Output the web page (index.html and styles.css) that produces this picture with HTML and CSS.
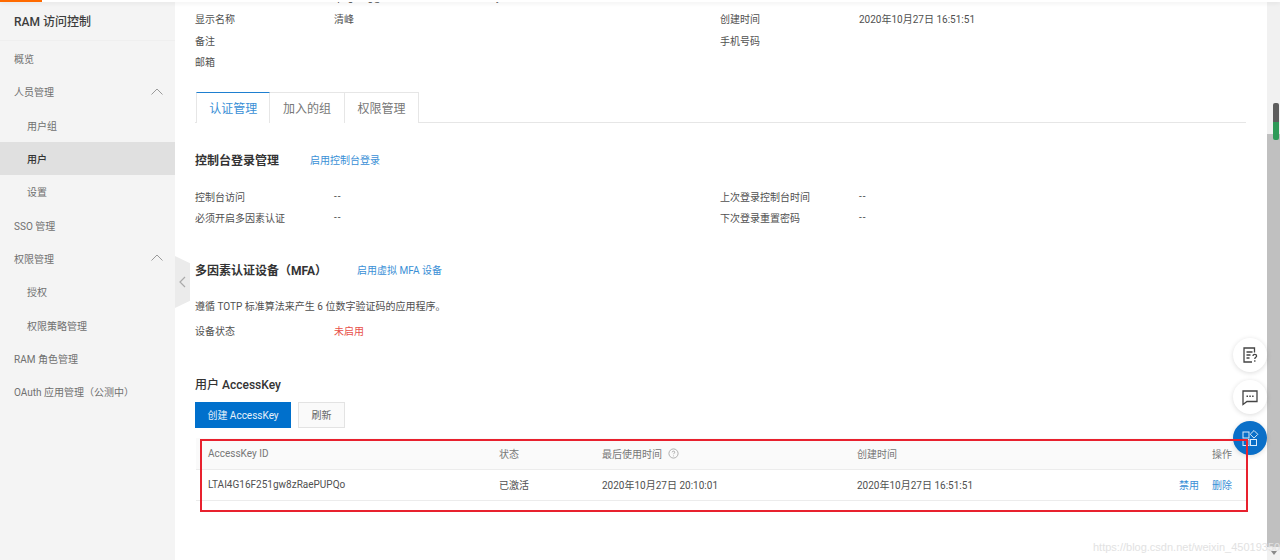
FILE: index.html
```html
<!DOCTYPE html>
<html lang="zh">
<head>
<meta charset="utf-8">
<title>RAM 访问控制</title>
<link rel="stylesheet" href="styles.css">
</head>
<body>
<div class="app">
  <aside class="sidebar">
    <div class="brand">RAM 访问控制</div>
    <nav class="nav">
      <div class="nav-item">概览</div>
      <div class="nav-item has-caret">人员管理<svg class="caret" viewBox="0 0 12 7"><path d="M.5 6.500 6 1l5.500 5.500"/></svg></div>
      <div class="nav-item sub">用户组</div>
      <div class="nav-item sub active">用户</div>
      <div class="nav-item sub">设置</div>
      <div class="nav-item">SSO 管理</div>
      <div class="nav-item has-caret">权限管理<svg class="caret" viewBox="0 0 12 7"><path d="M.5 6.500 6 1l5.500 5.500"/></svg></div>
      <div class="nav-item sub">授权</div>
      <div class="nav-item sub">权限策略管理</div>
      <div class="nav-item">RAM 角色管理</div>
      <div class="nav-item">OAuth 应用管理（公测中）</div>
    </nav>
  </aside>
  <main class="main">
    <div class="info-grid info-top">
      <div class="cell"><span class="label"></span><span>qingfeng@1000000000000000.onaliyun.com</span><span class="copy-icon"></span></div>
      <div class="cell"></div>
      <div class="cell"><span class="label">显示名称</span><span>清峰</span></div>
      <div class="cell"><span class="label">创建时间</span><span>2020年10月27日 16:51:51</span></div>
      <div class="cell"><span class="label">备注</span></div>
      <div class="cell"><span class="label">手机号码</span></div>
      <div class="cell"><span class="label">邮箱</span></div>
    </div>
    <div class="tabs">
      <div class="tab current">认证管理</div>
      <div class="tab">加入的组</div>
      <div class="tab">权限管理</div>
    </div>
    <div class="heading-row login-head"><h2>控制台登录管理</h2><a class="link">启用控制台登录</a></div>
    <div class="info-grid login-info">
      <div class="cell"><span class="label">控制台访问</span><span class="dash">--</span></div>
      <div class="cell"><span class="label">上次登录控制台时间</span><span class="dash">--</span></div>
      <div class="cell"><span class="label">必须开启多因素认证</span><span class="dash">--</span></div>
      <div class="cell"><span class="label">下次登录重置密码</span><span class="dash">--</span></div>
    </div>
    <div class="heading-row mfa-head"><h2>多因素认证设备（MFA）</h2><a class="link">启用虚拟 MFA 设备</a></div>
    <p class="desc">遵循 TOTP 标准算法来产生 6 位数字验证码的应用程序。</p>
    <div class="cell device"><span class="label">设备状态</span><span class="danger">未启用</span></div>
    <h2 class="ak-title">用户 AccessKey</h2>
    <div class="actions">
      <button class="btn primary">创建 AccessKey</button>
      <button class="btn">刷新</button>
    </div>
    <div class="table">
      <div class="tr th">
        <div class="c1">AccessKey ID</div>
        <div class="c2">状态</div>
        <div class="c3">最后使用时间<svg class="help" viewBox="0 0 12 12"><circle cx="6" cy="6" r="5"/><path d="M4.600 4.700c0-.8.6-1.300 1.400-1.300s1.400.5 1.400 1.200c0 1.100-1.400 1.100-1.400 2.200"/><path d="M6 8.200v.9"/></svg></div>
        <div class="c4">创建时间</div>
        <div class="c5">操作</div>
      </div>
      <div class="tr">
        <div class="c1">LTAI4G16F251gw8zRaePUPQo</div>
        <div class="c2">已激活</div>
        <div class="c3">2020年10月27日 20:10:01</div>
        <div class="c4">2020年10月27日 16:51:51</div>
        <div class="c5 ops"><a class="link">禁用</a><a class="link">删除</a></div>
      </div>
    </div>
  </main>
  <div class="scrollbar">
    <div class="scroll-thumb"></div>
    <div class="scroll-pill"></div>
    <div class="scroll-arrow"></div>
  </div>
</div>

<div class="top-bar"><div class="top-accent"></div></div>
<div class="collapse-tab"><svg viewBox="0 0 7 12"><path d="M6 1 1 6l5 5"/></svg></div>
<div class="fab fab-doc"><svg viewBox="0 0 18 18"><path d="M13.500 6.500V2H3v14h8"/><path d="M5.500 6h6M5.500 9h4M5.500 12h3"/><path d="M12 10c0-1.100.8-1.700 1.800-1.700s1.800.6 1.800 1.600c0 1.400-1.800 1.400-1.800 3M13.800 14.200v1.500"/></svg></div>
<div class="fab fab-chat"><svg viewBox="0 0 18 18"><path d="M2 3h14v10.500H6L2 16.500z"/><path class="dots" d="M5.500 8.200h1.500M8.300 8.200h1.500M11.100 8.200h1.500"/></svg></div>
<div class="fab fab-apps"><svg viewBox="0 0 18 18"><rect x="2" y="3" width="6" height="6"/><rect x="2" y="10.500" width="6" height="6"/><rect x="9.500" y="10.500" width="6" height="6"/><path d="M13 1.500 16.800 5.300 13 9.100 9.200 5.300z"/></svg></div>
<div class="red-box"></div>
<div class="watermark">https://blog.csdn.net/weixin_45019350</div>
</body>
</html>
```
FILE: styles.css
```css
* { box-sizing: border-box; }
html, body { margin: 0; height: 100%; overflow: hidden; background: #fff; }
body {
  font-family: Roboto, "Noto Sans CJK SC", sans-serif;
  font-size: 10px;
  color: #505050;
}
.app { display: flex; height: 560px; overflow: hidden; }

.sidebar { width: 175px; flex: none; background: #f4f4f4; padding-top: 3px; }
.brand {
  height: 38px; line-height: 38px; padding-left: 14px;
  font-size: 12px; font-weight: 500; color: #3d3d3d;
  border-bottom: 1px solid #efefef;
}
.nav { padding-top: 1px; }
.nav-item {
  display: flex; align-items: center; justify-content: space-between;
  height: 33.3px; padding: 0 12px 0 14px; color: #707070;
}
.nav-item.sub { padding-left: 27px; }
.nav-item.active { background: #e0e0e0; color: #333; font-weight: 500; }
.caret { width: 12px; height: 7px; margin-bottom: 1px; fill: none; stroke: #9a9a9a; stroke-width: 1; }

.main { flex: 1; min-width: 0; padding: 0 21px 0 20px; overflow: hidden; }
.info-grid { display: grid; grid-template-columns: 525px 1fr; }
.info-top { margin-top: -13.500px; grid-auto-rows: 21.500px; }
.cell { display: flex; align-items: center; white-space: nowrap; }
.label { width: 139px; flex: none; }
.dash { letter-spacing: 1px; }
.copy-icon { width: 8px; height: 9px; margin: 0 0 0 9px; border-bottom: 1px solid #3a8fd6; }

.tabs { display: flex; margin-top: 19px; height: 31px; border-bottom: 1px solid #e6e6e6; padding-left: 1px; }
.tab {
  width: 74.400px; height: 31px; display: flex; align-items: center; justify-content: center;
  font-size: 12px; color: #777; border: 1px solid #e6e6e6; border-left: 0; border-bottom: 0;
  background: #fff;
}
.tab.current { color: #3a8fd6; border-top: 1px solid #1e7fd0; border-left: 1px solid #e6e6e6; }

.heading-row { display: flex; align-items: center; }
h2 { margin: 0; font-size: 12px; font-weight: 700; color: #333; }
.link { color: #3a8fd6; }
.login-head { margin-top: 27px; height: 20px; gap: 31px; }
.login-info { margin-top: 16px; grid-auto-rows: 21.500px; }
.mfa-head { margin-top: 31px; height: 20px; gap: 30px; }
.desc { margin: 17px 0 0; height: 20px; line-height: 20px; }
.device { margin-top: 4px; height: 20px; }
.danger { color: #e8504a; }

.ak-title { margin-top: 34px; height: 20px; line-height: 20px; font-weight: 500; }
.actions { display: flex; gap: 7px; margin-top: 7px; }
.btn {
  height: 26px; width: 47px; padding: 0; font: inherit; color: #666;
  background: #fafafa; border: 1px solid #e3e3e3;
}
.btn.primary { width: 96px; color: #e6f1fa; background: #0070cc; border-color: #0070cc; }

.table { margin-top: 10px; margin-left: 1px; }
.tr { display: flex; align-items: center; height: 31px; padding: 0 14px 0 12px; border-bottom: 1px solid #ececec; }
.tr.th { background: #fafafa; color: #777; height: 32px; }
.c1 { width: 291px; }
.c2 { width: 103px; }
.c3 { width: 255px; display: flex; align-items: center; }
.c4 { flex: 1; }
.c5 { width: 60px; text-align: right; }
.ops { display: flex; justify-content: flex-end; gap: 13px; }
.help { width: 11px; height: 11px; margin-left: 6px; fill: none; stroke: #a0a0a0; stroke-width: .9; }

.scrollbar { width: 13px; flex: none; background: #f1f1f1; position: relative; }
.scroll-thumb { position: absolute; left: 0; right: 0; top: 134px; bottom: 13px; background: #c0c0c0; }
.scroll-pill { position: absolute; left: 6px; width: 6px; top: 103px; height: 37px; border-radius: 2px; background: linear-gradient(#5d5d5d 0 51%, #2f9a58 51%); }
.scroll-arrow { position: absolute; left: 4px; bottom: 5px; border: 3px solid transparent; border-top: 4px solid #8a8a8a; border-bottom: 0; }

.top-bar { position: absolute; left: 0; right: 0; top: 0; height: 2px; background: #fff; box-shadow: 0 1px 4px rgba(0,0,0,.1); }
.top-accent { width: 42px; height: 2px; background: #ff6a00; }
.collapse-tab {
  position: absolute; left: 175px; top: 256px; width: 15px; height: 52px;
  background: #ebebeb; clip-path: polygon(0 0, 100% 14%, 100% 86%, 0 100%);
  display: flex; align-items: center; justify-content: center;
}
.collapse-tab svg { width: 7px; height: 12px; fill: none; stroke: #aaa; stroke-width: 1.200; }
.red-box { position: absolute; left: 200px; top: 439px; width: 1048px; height: 73px; border: 2px solid #e8212e; pointer-events: none; }

.fab {
  position: absolute; left: 1233px; width: 34px; height: 34px; border-radius: 50%;
  background: #fff; box-shadow: 0 1px 5px rgba(0,0,0,.14);
  display: flex; align-items: center; justify-content: center;
}
.fab svg { width: 18px; height: 18px; fill: none; stroke: #444; stroke-width: 1.300; }
.fab .dots { stroke-width: 1.600; }
.fab-doc { top: 338px; }
.fab-chat { top: 380px; }
.fab-apps { top: 421px; background: #0a6fc8; }
.fab-apps svg { stroke: #dcecf9; stroke-width: 1; }
.watermark {
  position: absolute; left: 1093px; top: 541px;
  font-family: "Liberation Sans", sans-serif; font-size: 11px; color: #e2e2e2; white-space: nowrap;
}
```
